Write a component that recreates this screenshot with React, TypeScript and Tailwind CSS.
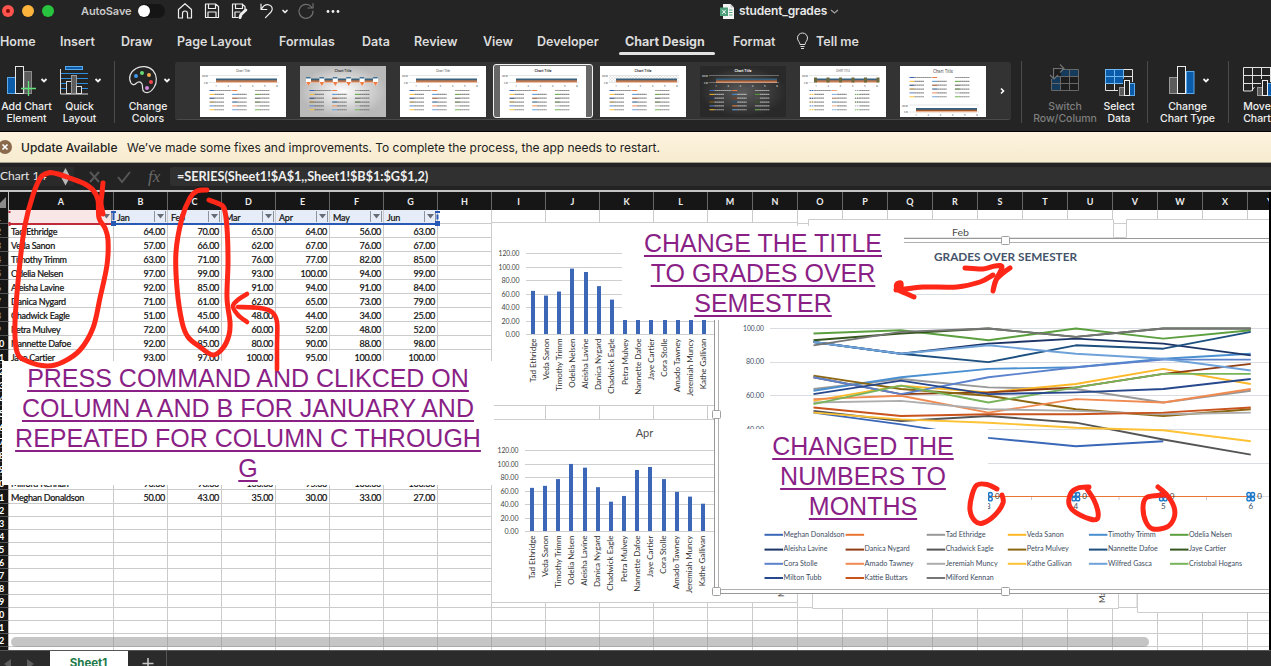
import React from "react";

type Pt = [number, number];

const COLS: [string, string][] = [
  ["A", "w-[105px]"], ["B", "w-[54px]"], ["C", "w-[54px]"], ["D", "w-[54px]"], ["E", "w-[54px]"], ["F", "w-[54px]"],
  ["G", "w-[54px]"], ["H", "w-[54px]"], ["I", "w-[54px]"], ["J", "w-[54px]"], ["K", "w-[54px]"], ["L", "w-[54px]"],
  ["M", "w-[45px]"], ["N", "w-[45px]"], ["O", "w-[45px]"], ["P", "w-[45px]"], ["Q", "w-[45px]"], ["R", "w-[45px]"],
  ["S", "w-[45px]"], ["T", "w-[45px]"], ["U", "w-[45px]"], ["V", "w-[45px]"], ["W", "w-[45px]"], ["X", "w-[45px]"], ["Y", "w-[45px]"],
];

const MONTHS = ["Jan", "Feb", "Mar", "Apr", "May", "Jun"];

const STUDENTS: { name: string; color: string; v: number[] }[] = [
  { name: "Tad Ethridge", color: "#989898", v: [64, 70, 65, 64, 56, 63] },
  { name: "Veda Sanon", color: "#fdb827", v: [57, 66, 62, 67, 76, 67] },
  { name: "Timothy Trimm", color: "#4a8fd0", v: [63, 71, 76, 77, 82, 85] },
  { name: "Odelia Nelsen", color: "#5b9f3e", v: [97, 99, 93, 100, 94, 99] },
  { name: "Aleisha Lavine", color: "#1c3566", v: [92, 85, 91, 94, 91, 84] },
  { name: "Danica Nygard", color: "#8f3d14", v: [71, 61, 62, 65, 73, 79] },
  { name: "Chadwick Eagle", color: "#555555", v: [51, 45, 48, 44, 34, 25] },
  { name: "Petra Mulvey", color: "#8b6712", v: [72, 64, 60, 52, 48, 52] },
  { name: "Nannette Dafoe", color: "#1d4f80", v: [92, 85, 80, 90, 88, 98] },
  { name: "Jaye Cartier", color: "#35571f", v: [93, 97, 100, 95, 100, 100] },
  { name: "Cora Stolle", color: "#5b82cd", v: [71, 61, 71, 77, 81.5, 81.5] },
  { name: "Amado Tawney", color: "#f08a51", v: [58, 60, 50, 58, 56, 64] },
  { name: "Jeremiah Muncy", color: "#adadad", v: [56, 57, 52, 51, 49, 50] },
  { name: "Kathe Gallivan", color: "#fdc235", v: [50, 46, 44, 41, 39.5, 33] },
  { name: "Wilfred Gasca", color: "#6ea2d9", v: [92, 85, 90, 85, 82, 75] },
  { name: "Cristobal Hogans", color: "#78b459", v: [55, 66, 56, 65, 73, 73] },
  { name: "Milton Tubb", color: "#27488d", v: [61, 69, 61, 62, 64, 70] },
  { name: "Kattie Buttars", color: "#c9531d", v: [53, 48, 49, 49, 50, 53] },
  { name: "Milford Kennan", color: "#757575", v: [90, 98, 100, 95, 100, 100] },
  { name: "Meghan Donaldson", color: "#3a67b8", v: [50, 43, 35, 30, 33, 27] },
];

const f2 = (n: number) => Math.floor(n).toFixed(2);

function smooth(p: Pt[]): string {
  let d = `M${p[0][0]} ${p[0][1]}`;
  for (let i = 0; i < p.length - 1; i++) {
    const a = p[i - 1] || p[i], b = p[i], c = p[i + 1], e = p[i + 2] || c;
    d += `C${b[0] + (c[0] - a[0]) / 6} ${b[1] + (c[1] - a[1]) / 6} ${c[0] - (e[0] - b[0]) / 6} ${c[1] - (e[1] - b[1]) / 6} ${c[0]} ${c[1]}`;
  }
  return d;
}

/* ---------- title bar ---------- */

function TitleBar() {
  return (
    <div className="relative flex h-6 shrink-0 items-center">
      <svg className="h-6 w-[76px] shrink-0" viewBox="0 0 76 24">
        <circle cx="8" cy="11" r="6" fill="#fe544d" />
        <circle cx="8" cy="11" r="2" fill="#7d0b07" />
        <circle cx="28" cy="11" r="6" fill="#fdb43c" />
        <circle cx="48" cy="11" r="6" fill="#28c440" />
      </svg>
      <div className="w-[62px] pb-0.5 pl-[5px] text-[11px] font-semibold tracking-[-0.1px] text-[#c9c9c9]">AutoSave</div>
      <div className="mb-0.5 h-[14px] w-[27px] rounded-full bg-[#151515]">
        <div className="mt-[1px] size-3 rounded-full bg-white" />
      </div>
      <svg className="h-6 w-[190px]" viewBox="165 0 190 24" fill="none" stroke="#efefef" strokeWidth="1.2" strokeLinecap="round" strokeLinejoin="round">
        <path d="M178.500 9.500 185 3.700l6.500 5.800V18h-4v-4.500a2.500 2.500 0 0 0-5 0V18h-4z" />
        <path d="M206 4h9.500l3 2.500V17.500h-13V4zM208.500 4v4.500h7V4M208 17.500v-5.500h8v5.500" />
        <path d="M238 17.500h-5.500V4h9.500l3 2.500V9M235.500 4v4.500h7V4M235 17.500v-5.500h5" />
        <path d="m240 17.500 1-3 4.800-4.500" strokeWidth="3" />
        <path d="M261 4v5.500h5.800M261.300 9.200c2-3.500 5-5.200 8-4.200s4 4.500 1.700 7l-5.500 5.700" />
        <path d="m283 10.500 2 2 2-2" strokeWidth="1.700" />
        <path d="M311.500 7A7 7 0 1 0 313 11M313 3.500v4.500h-5" stroke="#707070" />
        <g fill="#efefef" stroke="none"><circle cx="328" cy="11.500" r="1.400" /><circle cx="333" cy="11.500" r="1.400" /><circle cx="338" cy="11.500" r="1.400" /></g>
      </svg>
      <div className="ml-[365px] flex items-center pb-0.5">
        <svg className="size-[15px]" viewBox="0 0 15 15">
          <path d="M3 0h7.500L14 3.500V15H3z" fill="#f4f4f4" />
          <path d="M10.500 0v3.500H14" fill="#c9c9c9" />
          <path d="M9 6h3.500M9 8.500h3.500M9 11h3.500" stroke="#5aa883" />
          <rect y="3.500" width="8" height="8.500" fill="#4d9f79" />
          <path d="m2.200 5.800 3.600 4M5.800 5.800l-3.600 4" stroke="#fff" />
        </svg>
        <span className="ml-1 w-[91px] text-[12px] font-semibold tracking-[-0.15px] text-[#e8e8e8]">student_grades</span>
        <svg className="mt-0.5 h-2 w-[9px]" viewBox="0 0 9 8"><path d="m1 2 3.500 3L8 2" fill="none" stroke="#a0a0a0" strokeWidth="1.300" /></svg>
      </div>
    </div>
  );
}

const TABS: [string, string][] = [
  ["Home", "w-[60px]"], ["Insert", "w-[61px]"], ["Draw", "w-[56px]"], ["Page Layout", "w-[102px]"], ["Formulas", "w-[83px]"],
  ["Data", "w-[52px]"], ["Review", "w-[69px]"], ["View", "w-[54px]"], ["Developer", "w-[87px]"],
];

function Tabs() {
  return (
    <div className="flex h-[34px] shrink-0 items-start pt-[9px] text-[12.5px] font-semibold leading-[17px] text-[#dcdcdc]">
      {TABS.map(([t, w]) => (
        <div key={t} className={"shrink-0 whitespace-nowrap " + w}>{t}</div>
      ))}
      <div className="ml-px flex w-[108px] shrink-0 flex-col">
        <span className="whitespace-nowrap font-bold">Chart Design</span>
        <span className="-ml-1.5 mt-[2px] h-[3px] w-24 rounded-full bg-[#e2e2e2]" />
      </div>
      <div className="w-[62px] shrink-0">Format</div>
      <svg className="-mt-px h-[18px] w-[15px] shrink-0" viewBox="0 0 15 18" fill="none" stroke="#dcdcdc">
        <path d="M5 12.500C5 10 2.500 9 2.500 6a5 5 0 0 1 10 0c0 3-2.500 4-2.500 6.500zM5.500 14.500h4M6 16.500h3" />
      </svg>
      <div className="ml-1.5 whitespace-nowrap">Tell me</div>
    </div>
  );
}

/* ---------- ribbon ---------- */

const LEG = ["#3a67b8", "#ed7d45", "#a0a0a0", "#fdb827", "#4a8fd0", "#5b9f3e", "#1c3566", "#8f3d14", "#555", "#8b6712", "#1d4f80", "#35571f", "#5b82cd", "#f08a51", "#adadad", "#fdc235", "#6ea2d9", "#78b459"];

function Thumb({ kind }: { kind: string }) {
  const dark = kind === "dark";
  const grad = kind === "gradient";
  const bottom = kind === "bottom";
  const text = dark ? "#eee" : "#444";
  const bandY = bottom ? 42 : 12.500;
  const legY = bottom ? 11.500 : 24.500;
  const id = "bg-" + kind;
  const bold = grad || dark || kind === "selected" || kind === "pattern";
  return (
    <svg className="h-[51px] w-[86px] shrink-0" viewBox="0 0 86 51">
      <defs>
        <radialGradient id={id}>
          <stop offset="0" stopColor={dark ? "#5a5a5a" : grad ? "#fdfdfd" : "#fff"} />
          <stop offset="1" stopColor={dark ? "#292929" : grad ? "#b9b9b9" : "#fff"} />
        </radialGradient>
        <pattern id={id + "p"} width="3" height="3" patternUnits="userSpaceOnUse"><path d="M0 0l3 3M3 0L0 3" stroke="#ccc" strokeWidth=".4" /></pattern>
      </defs>
      <rect width="86" height="51" fill={"url(#" + id + ")"} />
      {kind === "pattern" && <rect x="9" y="9" width="70" height="7" fill={"url(#" + id + "p)"} />}
      <text x="43" y={bottom ? 6.500 : 5.500} fontSize={bottom ? 4.600 : 3.600} fontWeight={bold ? 700 : 400} fill={text} textAnchor="middle" textLength={bottom ? 20 : bold ? 17 : 14} lengthAdjust="spacingAndGlyphs">{kind === "caps" ? "CHART TITLE" : "Chart Title"}</text>
      {!grad && <path d={`M9 ${bandY - 3}H79M9 ${bandY + 4}H79`} stroke={dark ? "#888" : "#ddd"} strokeWidth=".7" />}
      {!grad && <text x="8" y={bandY - 1.500} fontSize="2.600" fill={text} textAnchor="end" textLength="6" lengthAdjust="spacingAndGlyphs">200.00</text>}
      {!grad && <text x="8" y={bandY + 5} fontSize="2.600" fill={text} textAnchor="end" textLength="4" lengthAdjust="spacingAndGlyphs">0.00</text>}
      <rect x={grad ? 8 : 16} y={bandY} width={grad ? 68 : 61} height="2" fill="#37617c" />
      <rect x={grad ? 8 : 16} y={bandY + 1.800} width={grad ? 68 : 61} height="1.600" fill="#a0582f" />
      <rect x={grad ? 8 : 16} y={bandY + 3.200} width={grad ? 68 : 61} height="1" fill="#f4ac84" />
      {[0, 1, 2, 3, 4, 5].map((i) => (
        <g key={i}>
          {grad && <path d={`M${6 + i * 13.400} 12h5v5l-2.500 3-2.500-3z`} fill="#fff" />}
          {grad && <path d={`M${6 + i * 13.400} 16h5l-2.500 4z`} fill="#ed7d45" />}
          {grad && <rect x={6 + i * 13.400} y="11" width="4.600" height="1.500" fill="#45769a" />}
          {kind === "caps" && <rect x={14 + i * 12.500} y="11.500" width="3" height="5" fill="#6b6a3d" />}
          {!grad && <text x={16 + i * 12.200} y={bandY + 8} fontSize="2.600" fill={text} textAnchor="middle">{i + 1}</text>}
        </g>
      ))}
      {LEG.map((c, i) => {
        const x = 9.500 + (i % 3) * 22.700, y = legY + Math.floor(i / 3) * 3.850;
        return (
          <g key={i}>
            <path d={`M${x} ${y}h5`} stroke={c} strokeWidth="1" strokeDasharray={kind === "caps" ? "1.500 .6" : undefined} />
            {i !== 1 && <path d={`M${x + 5} ${y}h${i === 0 ? 17 : 9.500}`} stroke={text} strokeWidth="1.200" strokeDasharray="1.800 .2" opacity=".6" />}
          </g>
        );
      })}
    </svg>
  );
}

function Tool({ w, x, l1, l2, dim, children }: { w: string; x: number; l1: string; l2: string; dim?: boolean; children: React.ReactNode }) {
  return (
    <div className={"flex shrink-0 flex-col items-center " + w}>
      <svg className="h-[38px] w-full overflow-visible" viewBox={`${x} 62 90 38`} preserveAspectRatio="xMinYMin slice">{children}</svg>
      <div className={"mt-px whitespace-nowrap text-center text-[10.5px] font-medium leading-3 tracking-[-0.05px] " + (dim ? "text-[#7e7e7e]" : "text-[#efefef]")}>
        {l1}<br />{l2}
      </div>
    </div>
  );
}

const Chev = ({ x }: { x: number }) => <path d={`m${x - 2.500} 79 2.500 2.500 2.500-2.500`} fill="none" stroke="#f2f2f2" strokeWidth="1.800" />;
const Divider = ({ m }: { m: string }) => <div className={"h-[62px] w-px shrink-0 self-start bg-[#4c4c4c] " + m} />;

function Ribbon() {
  return (
    <div className="flex h-[73px] shrink-0 overflow-hidden pt-[3px]">
      <Tool w="w-[53px] pt-px" x={0} l1="Add Chart" l2="Element">
        <rect x="7.500" y="77.500" width="8" height="16" fill="#0a5cab" stroke="#5ba9e8" />
        <rect x="24" y="71.500" width="7.500" height="22" fill="#5c5c5c" stroke="#8b8b8b" />
        <rect x="15.500" y="66.500" width="8" height="27" fill="#242424" stroke="#e6e6e6" />
        <path d="M28.500 81v15M21 88.500h15" stroke="#62e07b" strokeWidth="1.300" />
        <Chev x={44} />
      </Tool>
      <Tool w="w-[53px] pt-px" x={53} l1="Quick" l2="Layout">
        <rect x="65.500" y="66.500" width="17" height="3" fill="#0a5cab" stroke="#5ba9e8" />
        <path d="M61 73.500h27M61 78.500h27M61 83.500h27M61 88.500h27" stroke="#2d8ddf" />
        <path d="M60.500 69v25H88" stroke="#dcdcdc" fill="none" />
        <g stroke="#dcdcdc" fill="#242424"><rect x="66.500" y="81.500" width="5" height="12" /><rect x="71.500" y="75.500" width="5" height="18" fill="#5c5c5c" stroke="#999" /><rect x="76.500" y="86.500" width="5" height="7" /></g>
        <Chev x={98} />
      </Tool>
      <Divider m="ml-2" />
      <Tool w="ml-[6px] w-[54px] pt-px" x={121} l1="Change" l2="Colors">
        <path d="M131 83c-3-5-1-11 5-14.500 5-3 13-2.500 17 2s4.500 12 1 17c-3 4.500-6.500 6-9.500 4.500-3.500-2-1-5-2.500-8s-4-2.500-6-.500-4 1-5-.500z" fill="none" stroke="#e4e4e4" strokeWidth="1.200" />
        <circle cx="136" cy="76" r="2" fill="#3d98ec" /><circle cx="142" cy="73" r="2" fill="#65dc75" /><circle cx="149" cy="75" r="2" fill="#f5ac51" /><circle cx="151" cy="82" r="2" fill="#f0474c" /><circle cx="147" cy="88" r="2" fill="#cf86dc" />
        <Chev x={167} />
      </Tool>
      <div className="mt-px flex h-[58px] w-[836px] shrink-0 items-start gap-[14px] rounded-[3px] border-b border-[#4a4a4a] bg-[#333] pl-[25px] pt-[4px]">
        <Thumb kind="plain" />
        <Thumb kind="gradient" />
        <Thumb kind="thin" />
        <div className="-mx-[7px] -mt-[2px] flex h-[54px] w-[100px] shrink-0 justify-center rounded-[3px] border border-[#f2f2f2] bg-[#676767] pt-px">
          <Thumb kind="selected" />
        </div>
        <Thumb kind="pattern" />
        <Thumb kind="dark" />
        <Thumb kind="caps" />
        <Thumb kind="bottom" />
        <svg className="mt-[20px] h-3 w-2 shrink-0" viewBox="0 0 8 12"><path d="m1 2.500 2.500 2.500L1 7.500" fill="none" stroke="#fff" strokeWidth="1.600" /></svg>
      </div>
      <Divider m="ml-[10px]" />
      <Tool w="ml-[10px] w-[66px] pt-px" x={1032} l1="Switch" l2="Row/Column" dim>
        <rect x="1051.500" y="69.500" width="27" height="21" fill="#1d1d1d" />
        <path d="M1061 69.500h18v7h-18zM1051.500 77h9v14h-9z" fill="#143a5c" />
        <path d="M1062 69.500h16.500v21h-27V79M1060.500 76v14.500M1069.500 69.500v21M1056 76.500h22.500M1051.500 83.500h27" fill="none" stroke="#676767" />
        <path d="M1051 70h9v-7h-9z" fill="#242424" /><path d="M1053.500 79V68.500H1064M1050 75l4 4 4-4M1060 64.500l4 4-4 4" fill="none" stroke="#707070" strokeWidth="1.200" />
      </Tool>
      <Tool w="w-[42px] pt-px" x={1098} l1="Select" l2="Data">
        <path d="M1105.500 69.500h18v14h-18z" fill="#0a5cab" />
        <path d="M1105.500 69.500h27v21h-27zM1114.500 69.500v21M1123.500 69.500v21M1105.500 76.500h27M1105.500 83.500h27" fill="none" stroke="#e2e2e2" />
        <path d="M1105.500 69.500h18v14h-18zM1114.500 69.500v14M1105.500 76.500h18" fill="none" stroke="#6db6f2" />
        <path d="M1118 86h5v-7h7v3h6v15h-18z" fill="#242424" />
        <rect x="1119.500" y="87.500" width="5" height="8" fill="#5c5c5c" stroke="#999" /><rect x="1129.500" y="83.500" width="5" height="12" fill="#0a5cab" stroke="#5ba9e8" /><rect x="1124.500" y="80.500" width="5" height="15" fill="#242424" stroke="#eee" />
      </Tool>
      <Divider m="ml-[7px]" />
      <Tool w="ml-[7px] w-[65px] pt-px" x={1155} l1="Change" l2="Chart Type">
        <g transform="translate(2 0)">
          <rect x="1167.500" y="77.500" width="8" height="16" fill="#5c5c5c" stroke="#999" /><rect x="1184.500" y="71.500" width="7.500" height="22" fill="#0a5cab" stroke="#5ba9e8" /><rect x="1175.500" y="66.500" width="8" height="27" fill="#242424" stroke="#eee" />
        </g>
        <Chev x={1206} />
      </Tool>
      <Divider m="ml-2" />
      <Tool w="ml-[8px] w-[40px] pt-px" x={1237} l1="Move" l2="Chart">
        <path d="M1243.500 91V67.500H1275M1252.500 67v24M1261.500 67v24M1270.500 67v24M1243.500 75.500H1275M1243.500 83.500H1275M1243.500 91h8l3-4" fill="none" stroke="#e2e2e2" />
        <path d="M1256 86h5v-7h7v3h6v15h-18z" fill="#242424" />
        <rect x="1257.500" y="87.500" width="5" height="8" fill="#5c5c5c" stroke="#999" /><rect x="1267.500" y="83.500" width="5" height="12" fill="#0a5cab" stroke="#5ba9e8" /><rect x="1262.500" y="80.500" width="5" height="15" fill="#242424" stroke="#eee" />
      </Tool>
    </div>
  );
}

function UpdateBar() {
  return (
    <div className="flex h-8 shrink-0 items-center whitespace-nowrap border-b border-t border-b-[#a59f90] border-t-black bg-linear-to-b from-[#fef3de] to-[#f6ecd0] pt-px text-[12px] text-[#222]">
      <svg className="mb-px h-4 w-[21px] shrink-0" viewBox="0 0 21 16">
        <circle cx="5" cy="8" r="7" fill="#8a6a4a" />
        <path d="m2.500 5.500 5 5M7.500 5.500l-5 5" stroke="#fff" strokeWidth="1.700" />
      </svg>
      <span className="w-[106px] font-medium">Update Available</span>
      <span className="tracking-[-0.03px]">We’ve made some fixes and improvements. To complete the process, the app needs to restart.</span>
    </div>
  );
}

function FormulaBar() {
  return (
    <div className="flex h-[29px] shrink-0 items-start border-b-2 border-[#c4c4c4] bg-[#232323] pt-1 font-['Lato',sans-serif]">
      <div className="flex h-[19px] w-[74px] shrink-0 items-start bg-[#2a2a2a]">
        <span className="w-[60px] whitespace-nowrap text-[12px] leading-[18px] text-[#e6e6e6]">Chart 14</span>
        <svg className="h-[19px] w-3" viewBox="0 0 12 19"><path d="M1.500 8.500 5.500 1l4 7.500zM1.500 11l4 7.500 4-7.500z" fill="#b9b9b9" /></svg>
      </div>
      <svg className="h-5 w-[96px] shrink-0" viewBox="74 0 96 20" fill="none" stroke="#575757" strokeWidth="2">
        <path d="m90 5 9 10M99 5l-9 10M118 10l4 5 8-10" />
      </svg>
      <span className="-ml-[22px] mt-px w-[22px] shrink-0 font-['Liberation_Serif',serif] text-[17px] italic leading-[18px] text-[#6a6a6a]">fx</span>
      <div className="h-[19px] flex-1 rounded-l-[3px] bg-[#303030] pl-[7px] text-[12.7px] font-bold leading-[18px] tracking-[-0.05px] text-[#efefef]">
        =SERIES(Sheet1!$A$1,,Sheet1!$B$1:$G$1,2)
      </div>
    </div>
  );
}

/* ---------- worksheet ---------- */

function GridRow({ n }: { n: number }) {
  const s = (n >= 2 && n <= 11) || n === 20 || n === 21 ? STUDENTS[n - 2] : null;
  const h = n >= 22 ? "h-[13px] leading-[14px]" : n > 1 ? "h-[14px] leading-[16px]" : "h-[14px] leading-[16px]";
  return (
    <div className={"flex shrink-0 " + h}>
      <div className="w-[9px] shrink-0 overflow-hidden border-b border-r border-[#555] border-r-[#bbb] bg-[#161616] text-[9px] font-bold text-white">
        {n >= 10 ? <span className="-ml-px">{n % 10}</span> : <span className="-ml-[4px] text-[#888]">{n}</span>}
      </div>
      {COLS.map(([c, w], i) => {
        const header = n === 1 && i < 7;
        const tone = header ? (i === 0 ? "bg-[#f9e6e6]" : "bg-[#e6edf9]") : "bg-white";
        return (
          <div key={c} className={"flex shrink-0 overflow-hidden border-b border-r border-[#cbcbcb] [-webkit-text-stroke:0.22px_#111] " + w + " " + tone}>
            {header && (
              <>
                <span className="flex-1 pl-[3px] tracking-[-0.2px]">{i ? MONTHS[i - 1] : ""}</span>
                <svg className="h-[13px] w-[13px] shrink-0" viewBox="0 0 13 13"><path d="M.5 1v11M11.500 1v11" stroke="#8e939c" /><path d="M3 4h7l-3.500 4.500z" fill="#666b74" /></svg>
              </>
            )}
            {s && i === 0 && <span className="whitespace-nowrap pl-[2px] tracking-[-0.25px]">{s.name}</span>}
            {s && i > 0 && i < 7 && <span className="flex-1 pr-[2px] text-right tracking-[-0.3px]">{f2(s.v[i - 1])}</span>}
          </div>
        );
      })}
    </div>
  );
}

function BarChart({ x0, top, base, values, title, labelY }: { x0: number; top: number; base: number; values: number[]; title?: string; labelY: number }) {
  return (
    <g>
      <rect x="491.500" y={top + 0.500} width="306" height="183" fill="#fff" stroke="#cdcdcd" />
      {[0, 1, 2, 3, 4, 5, 6].map((i) => {
        const y = Math.round(base - i * 13.500) + 0.500;
        return (
          <g key={i}>
            <path d={`M${x0 - 7} ${y}H714`} stroke="#cfcfcf" />
            <text x={x0 - 13.500} y={y + 2} fontSize="7.800" fill="#444" textAnchor="end" textLength={i === 0 ? 14 : i > 4 ? 21 : 18} lengthAdjust="spacingAndGlyphs">{(i * 20).toFixed(2)}</text>
          </g>
        );
      })}
      {values.map((v, i) => {
        const cx = x0 + i * 13.150;
        return (
          <g key={i}>
            <rect x={Math.round(cx - 2)} y={base - v * 0.674} width="4" height={v * 0.674} fill="#3c66b6" />
            <text transform={`translate(${cx + 2.500} ${labelY}) rotate(-90)`} fontSize="8" fill="#333" textAnchor="end">{STUDENTS[i].name}</text>
          </g>
        );
      })}
      {title && <text x="644.500" y={top + 17.500} fontSize="11" fill="#4e4e4e" textAnchor="middle">{title}</text>}
    </g>
  );
}

const LEGEND: [string, string, number][][] = [
  [["Meghan Donaldson", "#3a67b8", 61], ["", "#ea7432", 0], ["Tad Ethridge", "#989898", 40], ["Veda Sanon", "#fdb827", 37], ["Timothy Trimm", "#4a8fd0", 48], ["Odelia Nelsen", "#5b9f3e", 43]],
  [["Aleisha Lavine", "#1c3566", 44], ["Danica Nygard", "#8f3d14", 45], ["Chadwick Eagle", "#555555", 48], ["Petra Mulvey", "#8b6712", 42], ["Nannette Dafoe", "#1d4f80", 50], ["Jaye Cartier", "#35571f", 37]],
  [["Cora Stolle", "#5b82cd", 34], ["Amado Tawney", "#f08a51", 49], ["Jeremiah Muncy", "#adadad", 52], ["Kathe Gallivan", "#fdc235", 45], ["Wilfred Gasca", "#6ea2d9", 44], ["Cristobal Hogans", "#78b459", 53]],
  [["Milton Tubb", "#27488d", 38], ["Kattie Buttars", "#c9531d", 43], ["Milford Kennan", "#757575", 48]],
];

const px = (i: number) => 813.500 + i * 87.450;
const py = (v: number) => 496.700 - v * 1.682;

function Handle({ x, y }: { x: number; y: number }) {
  return <rect x={x - 4} y={y - 4} width="8" height="8" rx="1" fill="#fff" stroke="#a0a0a0" />;
}

function LineChart() {
  return (
    <g>
      <rect x="714.500" y="238.500" width="580" height="355" fill="#fff" stroke="#989898" />
      <rect x="718.500" y="242.500" width="580" height="347" fill="#fff" stroke="#b0b0b0" />
      <text x="1005.500" y="261" fontSize="12" fontWeight="700" fill="#44546a" textAnchor="middle" textLength="143" lengthAdjust="spacingAndGlyphs">GRADES OVER SEMESTER</text>
      {[0, 20, 40, 60, 80, 100, 120].map((v) => (
        <g key={v}>
          <path d={`M770 ${Math.floor(py(v)) + 0.500}H1269`} stroke="#d9dce1" />
          {v > 0 && v < 120 && <text x="764" y={py(v) + 2.300} fontSize="7.800" fill="#3c4c62" textAnchor="end" textLength={v === 100 ? 21 : 18} lengthAdjust="spacingAndGlyphs">{v.toFixed(2)}</text>}
        </g>
      ))}
      {[STUDENTS[19], ...STUDENTS.slice(0, 19)].map((s) => (
        <polyline key={s.name} points={s.v.slice(0, s.name === "Meghan Donaldson" ? 5 : 6).map((v, i) => `${px(i)},${py(v)}`).join(" ")} fill="none" stroke={s.color} strokeWidth="1.900" strokeLinejoin="round" />
      ))}
      <path d="M813 496.500H1251" stroke="#ea7432" strokeWidth="1.200" />
      <path d="M1031.500 497v3M1119 497v3M1206.500 497v3" stroke="#c5c9d0" />
      {[2, 3, 4, 5].map((i) => (
        <g key={i}>
          {[[-2, -2], [2, -2], [-2, 2], [2, 2]].map(([a, b]) => (
            <circle key={a + "," + b} cx={px(i) + a} cy={496.700 + b * 1.150} r="1.900" fill="#d9ebfa" stroke="#1674c9" strokeWidth="1.300" />
          ))}
          <text x={px(i) + 6.500} y="499.300" fontSize="8" fill="#333">0</text>
          <text x={px(i)} y="509.300" fontSize="8" fill="#3c4c62" textAnchor="middle">{i + 1}</text>
        </g>
      ))}
      {LEGEND.map((row, r) =>
        row.map(([t, c, w], k) => {
          const x = 764.500 + k * 81.100, y = [534.800, 549.600, 563.800, 578][r];
          return (
            <g key={r + "-" + k}>
              <path d={`M${x} ${y}h18.500`} stroke={c} strokeWidth="2" />
              {t && <text x={x + 19} y={y + 1.800} fontSize="8" fill="#3c4c62" textLength={w} lengthAdjust="spacingAndGlyphs">{t}</text>}
            </g>
          );
        })
      )}
      <Handle x={716.500} y={414.500} />
      <Handle x={716.500} y={591.500} />
      <Handle x={1005.500} y={591.500} />
      <Handle x={1005.500} y={240.500} />
    </g>
  );
}

function ChartLayer() {
  return (
    <svg className="absolute left-0 top-0 h-[458px] w-[1269px] font-['Lato',sans-serif]" viewBox="0 192 1269 458">
      <rect x="797.500" y="223.500" width="15" height="384" fill="#fff" stroke="#cdcdcd" />
      <rect x="1113.500" y="223.500" width="23.500" height="384" fill="#fff" stroke="#cdcdcd" />
      <BarChart x0={533} top={222} base={334} values={[64, 57, 63, 97, 92, 71, 51, 72, 92, 93, 71, 58, 56, 50]} labelY={338.500} />
      <rect x="491" y="406" width="307" height="13" fill="#fff" />
      <path d="M545.500 405v14M599.500 405v14M653.500 405v14M707.500 405v14M491 405.500H714" stroke="#cbcbcb" />
      <BarChart x0={532} top={419} base={531} values={[64, 67, 77, 99.500, 94, 65, 43.500, 52, 90.500, 95, 77, 58, 51, 40.500]} title="Apr" labelY={535.500} />
      <path d="M808.500 219.500h305v18h-305z" fill="#fff" />
      <path d="M808.500 226V219.500H1113.500V237M1113.500 223.500h13M1126.500 237V219.500H1269" fill="none" stroke="#cdcdcd" />
      <path d="M1127 220h142v18h-142z" fill="#fff" />
      <path d="M1113.500 237.500h13" stroke="#cdcdcd" />
      <path d="M812.500 590v18.500H1118.500V590zM1137.500 590v22.500H1270V590z" fill="#fff" stroke="#cdcdcd" />
      <text x="960.500" y="236" fontSize="10" fill="#4e4e4e" textAnchor="middle" textLength="17" lengthAdjust="spacingAndGlyphs">Feb</text>
      <text transform="translate(1105 603) rotate(-90)" fontSize="8" fill="#333">Ma</text>
      <text transform="translate(784 597) rotate(-90)" fontSize="8" fill="#333">M</text>
      <LineChart />
    </svg>
  );
}

function SelectionMarks() {
  return (
    <svg className="absolute left-0 top-0 h-[40px] w-[450px]" viewBox="0 192 450 40">
      <path d="M9 224h103" stroke="#bf2b38" strokeWidth="2" />
      <path d="M9.500 211v2M9.500 222v4" stroke="#bf2b38" strokeWidth="2" />
      <path d="M115 224h320" stroke="#2859b5" strokeWidth="2" />
      <path d="M111 212h5M113.500 212v8M435 212h5M437.500 214.500v5" stroke="#2859b5" strokeWidth="2" />
      <rect x="111" y="221" width="5" height="5" fill="#2859b5" /><rect x="435" y="221" width="5" height="5" fill="#2859b5" />
    </svg>
  );
}

const INK: Pt[][] = [
  [[103, 183], [102, 193], [101, 203], [103, 214]],
  [[46, 174], [50, 172.500], [58, 174], [67, 177], [83, 183], [93, 190], [98, 200], [99, 218], [105, 228], [108, 240], [107, 265], [100, 298], [93, 328], [80, 350], [63, 362], [47, 366], [27, 361], [17, 352], [15, 322], [20, 262], [25, 225], [33, 195], [41, 177], [50, 172.500]],
  [[207, 190], [197, 191], [190, 198], [182, 218], [176, 252], [177, 288], [182, 322], [188, 337], [200, 347], [213, 355], [223, 348], [229, 335], [230, 322], [227, 298], [228, 262], [227, 228], [224, 208], [217, 203], [209, 200]],
  [[277, 369], [277, 345], [277, 322], [272, 312], [260, 308], [238, 307]],
  [[247, 294], [239, 299], [233, 306], [238, 315], [247, 322]],
  [[914, 297], [905, 293], [897, 289], [897, 284], [901, 283], [901, 288]],
  [[896, 290], [905, 289], [923, 287], [957, 287], [980, 282], [993, 275]],
  [[965, 268], [983, 269], [995, 266], [1002, 267], [996, 280], [993, 291], [996, 280], [1003, 273], [1010, 268]],
  [[997, 489], [987, 484.500], [977, 485], [972, 495], [970, 510], [975, 521], [983, 523], [995, 515], [1003, 503], [1002, 495]],
  [[1089, 487], [1078, 488], [1071, 493], [1069, 504], [1075, 512], [1090, 519], [1097, 519], [1098, 512], [1094, 500], [1087, 489]],
  [[1158, 487], [1167, 495], [1174, 507], [1174, 518], [1167, 527], [1153, 529], [1146, 522], [1143, 508], [1146, 498], [1157, 495.500], [1165, 495]],
];

function Ink() {
  return (
    <svg className="pointer-events-none absolute left-0 top-0 h-[666px] w-[1271px]" viewBox="0 0 1271 666">
      {INK.map((p, i) => (
        <path key={i} d={smooth(p)} fill="none" stroke="#ff2818" strokeWidth={i === 4 || i === 3 ? 4.600 : 5} strokeLinecap="round" strokeLinejoin="round" />
      ))}
    </svg>
  );
}

function Note({ lines, place }: { lines: string[]; place: string }) {
  return (
    <div className={"absolute whitespace-nowrap bg-white text-center font-['Liberation_Sans',Arial,sans-serif] text-[25px] leading-[30px] text-[#8a1f86] underline decoration-2 underline-offset-[3px] " + place}>
      {lines.map((l) => <div key={l}>{l}</div>)}
    </div>
  );
}

function Sheet() {
  return (
    <div className="relative flex h-[458px] shrink-0 flex-col overflow-hidden bg-white font-['Lato',sans-serif] text-[9px] text-[#111]">
      <div className="flex h-[18px] shrink-0 bg-[#161616] text-[9px] font-bold leading-[19px] text-[#ededed]">
        <div className="flex w-[9px] shrink-0 items-end border-r border-[#bbb]">
          <svg className="mb-0.5 h-[11px] w-[6px]" viewBox="0 0 6 11"><path d="M6 0v11H0V6z" fill="#8a8a8a" /></svg>
        </div>
        {COLS.map(([c, w]) => <div key={c} className={"shrink-0 border-r border-[#666] text-center " + w}>{c}</div>)}
      </div>
      {Array.from({ length: 33 }, (_, i) => <GridRow key={i} n={i + 1} />)}
      <ChartLayer />
      <SelectionMarks />
      <Note place="left-[2px] top-[169px] h-[124px] w-[492px] pt-[2px]" lines={["PRESS COMMAND AND CLIKCED ON", "COLUMN A AND B FOR JANUARY AND", "REPEATED FOR COLUMN C THROUGH", "G"]} />
      <Note place="left-[622px] top-[34px] h-[94px] w-[282px] pt-[2px]" lines={["CHANGE THE TITLE", "TO GRADES OVER", "SEMESTER"]} />
      <Note place="left-[738px] top-[237px] h-[94px] w-[250px] pt-[2px]" lines={["CHANGED THE", "NUMBERS TO", "MONTHS"]} />
      <div className="absolute left-[11px] top-[445px] h-[10px] w-[1138px] rounded-full bg-[#8c8c8c]/50" />
      <div className="absolute right-0 top-0 h-full w-[2px] bg-black" />
    </div>
  );
}

function SheetTabs() {
  return (
    <div className="flex h-4 shrink-0 overflow-hidden border-t border-[#555] bg-[#2b2b2b]">
      <svg className="h-4 w-[50px]" viewBox="0 0 50 16"><path d="m11 8-7 5 7 5zM27 8l7 5-7 5z" fill="#5d5d5d" /></svg>
      <div className="-mt-px h-[17px] w-[78px] bg-white pr-px pt-[3px] text-center text-[11.5px] font-bold leading-[20px] text-[#22794a]">Sheet1</div>
      <div className="w-[39px] border-r border-[#555]">
        <svg className="h-4 w-[39px]" viewBox="0 0 39 16"><path d="M20 7v11M14.500 12.500h11" stroke="#c6c6c6" strokeWidth="1.600" /></svg>
      </div>
    </div>
  );
}

export default function App() {
  return (
    <div className="relative flex h-[666px] w-[1271px] flex-col overflow-hidden bg-[#242424] font-['Inter',sans-serif]">
      <TitleBar />
      <Tabs />
      <Ribbon />
      <UpdateBar />
      <FormulaBar />
      <Sheet />
      <SheetTabs />
      <Ink />
    </div>
  );
}
